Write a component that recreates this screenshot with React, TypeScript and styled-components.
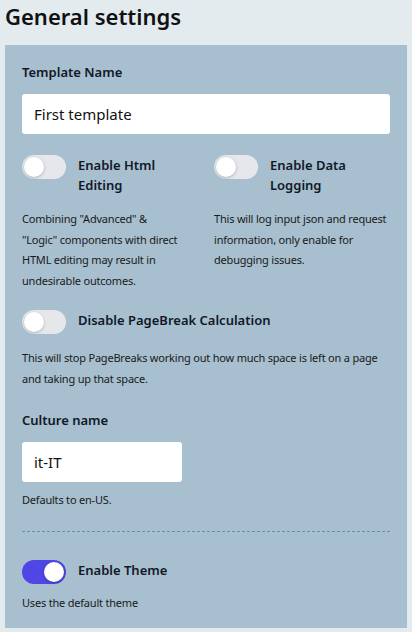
import React, { useState } from 'react';
import styled, { createGlobalStyle } from 'styled-components';

const GlobalStyle = createGlobalStyle`
  html, body {
    margin: 0;
    padding: 0;
    background: #e3ebef;
  }
  body {
    font-family: 'Noto Sans', 'Open Sans', sans-serif;
    color: #111827;
  }
  * {
    box-sizing: border-box;
  }
`;

const Page = styled.div`
  padding: 0 5px 5px;
  min-height: 632px;
`;

const Title = styled.h1`
  margin: 0 0 13px;
  font-size: 22px;
  line-height: 32px;
  font-weight: 600;
  color: #111;
`;

const Panel = styled.section`
  background: #a7bfcf;
  padding: 17px 17px 15px;
`;

const FieldLabel = styled.label`
  display: block;
  font-size: 13px;
  line-height: 20px;
  font-weight: 600;
  margin-bottom: 12px;
`;

const TextInput = styled.input<{ $width?: number }>`
  display: block;
  width: ${(p) => (p.$width ? `${p.$width}px` : '100%')};
  height: 40px;
  border: none;
  border-radius: 3px;
  background: #fff;
  padding: 0 12px;
  font-family: inherit;
  font-size: 15px;
  color: #111;
  outline: none;
`;

const Columns = styled.div`
  display: grid;
  grid-template-columns: 1fr 1fr;
  column-gap: 16px;
  margin-top: 21px;
`;

const ToggleBlock = styled.div<{ $top?: number }>`
  margin-top: ${(p) => p.$top ?? 0}px;
`;

const ToggleRow = styled.div`
  display: flex;
  align-items: flex-start;
  gap: 12px;
`;

const Track = styled.button<{ $on: boolean }>`
  position: relative;
  flex: none;
  width: 44px;
  height: 24px;
  border: none;
  padding: 0;
  border-radius: 12px;
  background: ${(p) => (p.$on ? '#4f46e5' : '#e5e7eb')};
  cursor: pointer;
`;

const Knob = styled.span<{ $on: boolean }>`
  position: absolute;
  top: 2px;
  left: ${(p) => (p.$on ? '22px' : '2px')};
  width: 20px;
  height: 20px;
  border-radius: 50%;
  background: #fff;
  box-shadow: 0 1px 3px rgba(0, 0, 0, 0.25);
`;

const ToggleLabel = styled.span`
  font-size: 13px;
  line-height: 20px;
  font-weight: 600;
`;

const Help = styled.p<{ $top?: number; $max?: number }>`
  margin: ${(p) => p.$top ?? 14}px 0 0;
  max-width: ${(p) => (p.$max ? `${p.$max}px` : 'none')};
  font-size: 11px;
  letter-spacing: -0.2px;
  line-height: 20.5px;
  color: #1a1a1a;
`;

const Field = styled.div`
  margin-top: 21px;
`;

const Divider = styled.hr`
  border: none;
  border-top: 1px dashed #6b8f9b;
  margin: 20px 0 28px;
`;

function Toggle({ label, initial = false }: { label: string; initial?: boolean }) {
  const [on, setOn] = useState(initial);
  return (
    <ToggleRow>
      <Track $on={on} onClick={() => setOn(!on)} aria-pressed={on}>
        <Knob $on={on} />
      </Track>
      <ToggleLabel>{label}</ToggleLabel>
    </ToggleRow>
  );
}

export default function App() {
  return (
    <Page>
      <GlobalStyle />
      <Title>General settings</Title>
      <Panel>
        <FieldLabel>Template Name</FieldLabel>
        <TextInput defaultValue="First template" />

        <Columns>
          <ToggleBlock>
            <Toggle label="Enable Html Editing" />
            <Help $top={14} $max={158}>
              Combining "Advanced" &amp; "Logic" components with direct HTML editing may result in
              undesirable outcomes.
            </Help>
          </ToggleBlock>
          <ToggleBlock>
            <Toggle label="Enable Data Logging" />
            <Help $top={14}>
              This will log input json and request information, only enable for debugging issues.
            </Help>
          </ToggleBlock>
        </Columns>

        <ToggleBlock $top={19}>
          <Toggle label="Disable PageBreak Calculation" />
          <Help>
            This will stop PageBreaks working out how much space is left on a page and taking up that
            space.
          </Help>
        </ToggleBlock>

        <Field>
          <FieldLabel>Culture name</FieldLabel>
          <TextInput $width={160} defaultValue="it-IT" />
          <Help $top={8}>Defaults to en-US.</Help>
        </Field>

        <Divider />

        <ToggleBlock>
          <Toggle label="Enable Theme" initial />
          <Help $top={9}>Uses the default theme</Help>
        </ToggleBlock>
      </Panel>
    </Page>
  );
}
